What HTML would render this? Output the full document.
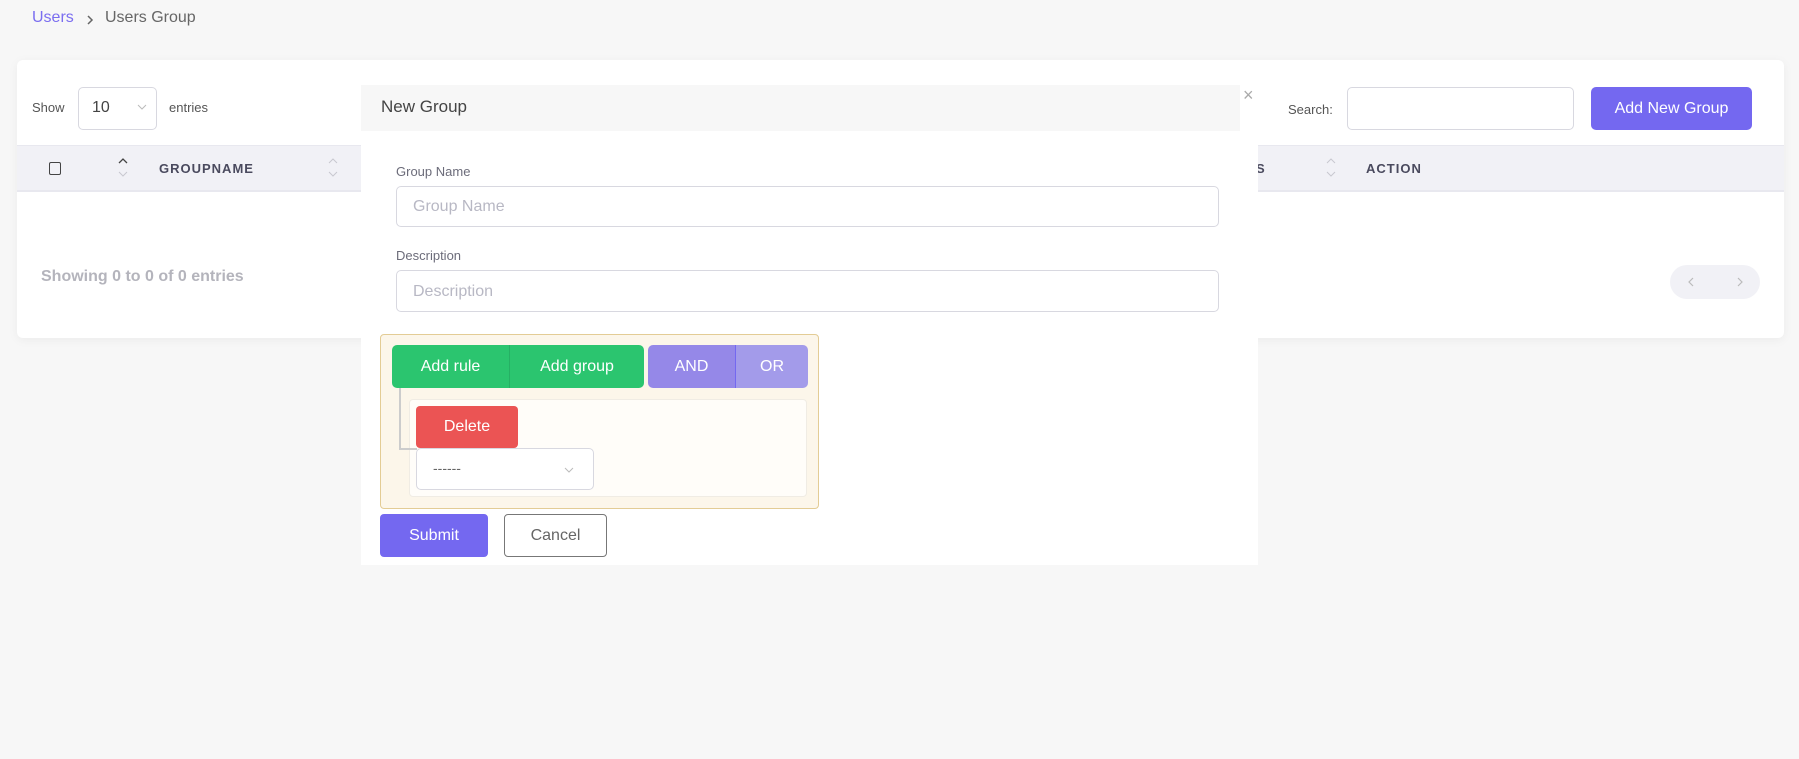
<!DOCTYPE html>
<html><head><meta charset="utf-8"><style>
*{box-sizing:border-box;margin:0;padding:0}
body{width:1799px;height:759px;background:#f7f7f7;font-family:"Liberation Sans",sans-serif;position:relative;overflow:hidden}
.a{position:absolute}
.card{left:17px;top:60px;width:1767px;height:278px;background:#fff;border-radius:6px;box-shadow:0 2px 10px rgba(0,0,0,.05)}
.inp{border:1px solid #d8d8e0;border-radius:5px;background:#fff}
.th{font-size:13px;font-weight:bold;color:#4a4a5e;letter-spacing:1px}
.btn{color:#fff;font-size:16px;display:flex;align-items:center;justify-content:center}
</style></head><body>
<div class="a" style="left:32px;top:9px;font-size:16px;color:#7b6ef0">Users</div>
<svg class="a" style="left:86px;top:14px" width="8" height="12"><path d="M2 2l4 4-4 4" fill="none" stroke="#666" stroke-width="1.5"/></svg>
<div class="a" style="left:105px;top:9px;font-size:16px;color:#666">Users Group</div>

<div class="a card"></div>
<div class="a" style="left:32px;top:100px;font-size:13px;color:#555">Show</div>
<div class="a inp" style="left:78px;top:87px;width:79px;height:43px"></div>
<div class="a" style="left:92px;top:99px;font-size:16px;color:#444">10</div>
<svg class="a" style="left:137px;top:104px" width="10" height="6"><path d="M1 1l4 4 4-4" fill="none" stroke="#bbb" stroke-width="1"/></svg>
<div class="a" style="left:169px;top:100px;font-size:13px;color:#555">entries</div>
<div class="a" style="left:1288px;top:102px;font-size:13px;color:#555">Search:</div>
<div class="a inp" style="left:1347px;top:87px;width:227px;height:43px"></div>
<div class="a btn" style="left:1591px;top:87px;width:161px;height:43px;background:#7468f0;border-radius:5px">Add New Group</div>

<div class="a" style="left:17px;top:145px;width:1767px;height:47px;background:#f1f1f6;border-top:1px solid #e8e8ef;border-bottom:2px solid #e8e8ef"></div>
<div class="a" style="left:49px;top:162px;width:12px;height:13px;border:1.5px solid #444;border-radius:2px"></div>
<svg class="a" style="left:118px;top:157px" width="10" height="22"><path d="M1 6l4-4 4 4" fill="none" stroke="#444" stroke-width="1.3"/><path d="M1 15l4 4 4-4" fill="none" stroke="#c8c8d0" stroke-width="1"/></svg>
<div class="a th" style="left:159px;top:161px">GROUPNAME</div>
<svg class="a" style="left:328px;top:157px" width="10" height="22"><path d="M1 6l4-4 4 4" fill="none" stroke="#c8c8d0" stroke-width="1"/><path d="M1 15l4 4 4-4" fill="none" stroke="#c8c8d0" stroke-width="1"/></svg>
<div class="a th" style="left:1256px;top:161px">S</div>
<svg class="a" style="left:1326px;top:157px" width="10" height="22"><path d="M1 6l4-4 4 4" fill="none" stroke="#c8c8d0" stroke-width="1"/><path d="M1 15l4 4 4-4" fill="none" stroke="#c8c8d0" stroke-width="1"/></svg>
<div class="a th" style="left:1366px;top:161px">ACTION</div>
<div class="a" style="left:41px;top:268px;font-size:16px;font-weight:bold;color:#b4b4bc">Showing 0 to 0 of 0 entries</div>
<div class="a" style="left:1670px;top:265px;width:90px;height:34px;background:#f1f1f6;border-radius:17px">
<svg class="a" style="left:18px;top:12px" width="6" height="10"><path d="M5 1L1 5l4 4" fill="none" stroke="#bbb" stroke-width="1.2"/></svg>
<svg class="a" style="left:67px;top:12px" width="6" height="10"><path d="M1 1l4 4-4 4" fill="none" stroke="#bbb" stroke-width="1.2"/></svg></div>

<!-- modal -->
<div class="a" style="left:361px;top:85px;width:897px;height:480px;background:#fff"></div>
<div class="a" style="left:361px;top:85px;width:879px;height:46px;background:#f7f7f7"></div>
<div class="a" style="left:381px;top:97px;font-size:17px;color:#444">New Group</div>
<div class="a" style="left:1243px;top:85px;font-size:18px;color:#aaa">×</div>
<div class="a" style="left:396px;top:164px;font-size:13px;color:#6c6c7a">Group Name</div>
<div class="a inp" style="left:396px;top:186px;width:823px;height:41px"></div>
<div class="a" style="left:413px;top:198px;font-size:16px;color:#b8b8c4">Group Name</div>
<div class="a" style="left:396px;top:248px;font-size:13px;color:#6c6c7a">Description</div>
<div class="a inp" style="left:396px;top:270px;width:823px;height:42px"></div>
<div class="a" style="left:413px;top:283px;font-size:16px;color:#b8b8c4">Description</div>

<div class="a" style="left:380px;top:334px;width:439px;height:175px;background:#fcf6ea;border:1px solid #e3cc95;border-radius:4px"></div>
<div class="a btn" style="left:392px;top:345px;width:117px;height:43px;background:#2bc56f;border-radius:5px 0 0 5px">Add rule</div>
<div class="a btn" style="left:509px;top:345px;width:135px;height:43px;background:#2bc56f;border-radius:0 5px 5px 0;border-left:1px solid #26b064">Add group</div>
<div class="a btn" style="left:648px;top:345px;width:87px;height:43px;background:#9588e8;border-radius:5px 0 0 5px">AND</div>
<div class="a btn" style="left:735px;top:345px;width:73px;height:43px;background:#a39bea;border-radius:0 5px 5px 0;border-left:1px solid #7468f0">OR</div>
<div class="a" style="left:409px;top:399px;width:398px;height:98px;background:#fffdf9;border:1px solid #f0ece4;border-radius:4px"></div>
<div class="a" style="left:399px;top:388px;width:18px;height:62px;border-left:2px solid #ccc;border-bottom:2px solid #ccc"></div>
<div class="a btn" style="left:416px;top:406px;width:102px;height:42px;background:#eb5454;border-radius:4px">Delete</div>
<div class="a inp" style="left:416px;top:448px;width:178px;height:42px"></div>
<div class="a" style="left:433px;top:460px;font-size:14px;color:#666">------</div>
<svg class="a" style="left:564px;top:467px" width="10" height="6"><path d="M1 1l4 4 4-4" fill="none" stroke="#bbb" stroke-width="1"/></svg>
<div class="a btn" style="left:380px;top:514px;width:108px;height:43px;background:#7468f0;border-radius:4px">Submit</div>
<div class="a btn" style="left:504px;top:514px;width:103px;height:43px;border:1px solid #777;border-radius:4px;color:#666">Cancel</div>
</body></html>
